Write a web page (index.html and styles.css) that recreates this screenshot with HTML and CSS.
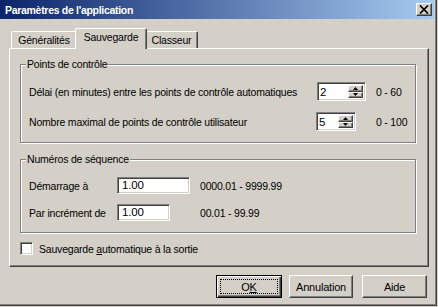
FILE: index.html
```html
<!DOCTYPE html>
<html lang="fr">
<head>
    <meta charset="UTF-8">
    <title>Paramètres de l'application</title>
    <link rel="stylesheet" href="styles.css">
</head>
<body>
    <div class="window">
        <div class="titlebar">
            <span class="title">Paramètres de l'application</span>
            <span class="close">
                <svg width="10" height="9" viewBox="0 0 10 9">
                    <path d="M1 0.5 L9 8.5 M9 0.5 L1 8.5" stroke="#000" stroke-width="1.7" fill="none"/>
                </svg>
            </span>
        </div>

        <div class="content">
            <div class="tabs">
                <div class="tab tab-first">Généralités</div>
                <div class="tab tab-active">Sauvegarde</div>
                <div class="tab tab-last">Classeur</div>
            </div>

            <div class="panel">
                <div class="group">
                    <div class="group-title">Points de contrôle</div>
                    <div class="rows rows-points">
                        <span>Délai (en minutes) entre les points de contrôle automatiques</span>
                        <div class="spin spin-wide">
                            <span class="spin-value">2</span>
                            <span class="spin-btns">
                                <span class="spin-btn"><svg width="5" height="3" viewBox="0 0 5 3"><path d="M2.5 0 L5 3 L0 3 Z" fill="#000"/></svg></span>
                                <span class="spin-btn"><svg width="5" height="3" viewBox="0 0 5 3"><path d="M0 0 L5 0 L2.5 3 Z" fill="#000"/></svg></span>
                            </span>
                        </div>
                        <span>0 - 60</span>

                        <span>Nombre maximal de points de contrôle utilisateur</span>
                        <div class="spin spin-narrow">
                            <span class="spin-value">5</span>
                            <span class="spin-btns">
                                <span class="spin-btn"><svg width="5" height="3" viewBox="0 0 5 3"><path d="M2.5 0 L5 3 L0 3 Z" fill="#000"/></svg></span>
                                <span class="spin-btn"><svg width="5" height="3" viewBox="0 0 5 3"><path d="M0 0 L5 0 L2.5 3 Z" fill="#000"/></svg></span>
                            </span>
                        </div>
                        <span>0 - 100</span>
                    </div>
                </div>

                <div class="group group-seq">
                    <div class="group-title">Numéros de séquence</div>
                    <div class="rows rows-seq">
                        <span>Démarrage à</span>
                        <div class="field field-wide">1.00</div>
                        <span>0000.01 - 9999.99</span>

                        <span>Par incrément de</span>
                        <div class="field field-narrow">1.00</div>
                        <span>00.01 - 99.99</span>
                    </div>
                </div>

                <div class="check-row">
                    <span class="checkbox"></span>
                    <span>Sauvegarde <u>a</u>utomatique à la sortie</span>
                </div>
            </div>

            <div class="buttons">
                <div class="btn btn-default"><span class="focus">O<u>K</u></span></div>
                <div class="btn btn-cancel">Annulation</div>
                <div class="btn btn-help">Aide</div>
            </div>
        </div>
    </div>
</body>
</html>
```

FILE: styles.css
```css
body {
    margin: 0;
    background-color: #d4d0c8;
    font-family: "Liberation Sans", Arial, sans-serif;
    font-size: 10.5px;
    letter-spacing: -0.2px;
    color: #000;
    white-space: nowrap;
}
.window {
    width: 437px;
    height: 306px;
    box-sizing: border-box;
    padding-right: 3px;
    background-color: #d4d0c8;
    box-shadow: inset -1px -1px 0 #404040, inset -2px -2px 0 #808080;
}
.titlebar {
    height: 19px;
    display: flex;
    align-items: center;
    justify-content: space-between;
    padding: 0 2px 0 5px;
    background: linear-gradient(to right, #0a246a, #a6caf0);
}
.title {
    color: #fff;
    font-weight: bold;
    font-size: 10.5px;
    letter-spacing: -0.3px;
}
.close {
    width: 16px;
    height: 13px;
    box-sizing: border-box;
    display: flex;
    align-items: center;
    justify-content: center;
    background-color: #d4d0c8;
    border-top: 1px solid #fff;
    border-left: 1px solid #fff;
    border-right: 1px solid #404040;
    border-bottom: 1px solid #404040;
    box-shadow: inset -1px -1px 0 #808080;
}
.content {
    padding: 9px 0 0 9px;
}
.tabs {
    display: flex;
    align-items: flex-end;
    height: 20px;
    padding-left: 2px;
}
.tab {
    box-sizing: border-box;
    height: 17px;
    line-height: 16px;
    text-align: center;
    border-top: 1px solid #fff;
    border-left: 1px solid #fff;
    border-right: 1px solid #404040;
    border-radius: 2px 2px 0 0;
    box-shadow: inset -1px 0 0 #808080;
    background-color: #d4d0c8;
}
.tab-first {
    width: 66px;
}
.tab-active {
    width: 72px;
    height: 21px;
    line-height: 17px;
    margin: 0 -2px -1px;
    position: relative;
    z-index: 1;
}
.tab-last {
    width: 53px;
}
.panel {
    width: 420px;
    height: 219px;
    box-sizing: border-box;
    padding: 15px 0 0 10px;
    border-top: 1px solid #fff;
    border-left: 1px solid #fff;
    border-right: 1px solid #404040;
    border-bottom: 1px solid #404040;
    box-shadow: inset -1px -1px 0 #808080;
}
.group {
    width: 396px;
    box-sizing: border-box;
    border: 1px solid #808080;
    box-shadow: 1px 1px 0 #fff, inset 1px 1px 0 #fff;
    padding: 0 0 11px 8px;
}
.group-seq {
    margin-top: 16px;
}
.group-title {
    width: fit-content;
    line-height: 13px;
    margin: -7px 0 0 -3px;
    padding: 0 1px;
    background-color: #d4d0c8;
}
.rows {
    display: grid;
    align-items: center;
    padding-top: 11px;
}
.rows-points {
    grid-template-columns: 287px 60px auto;
    grid-auto-rows: 19px;
    row-gap: 11px;
}
.rows-seq {
    grid-template-columns: 88px 83px auto;
    grid-auto-rows: 17px;
    row-gap: 10px;
}
.spin, .field {
    box-sizing: border-box;
    background-color: #fff;
    border-top: 1px solid #808080;
    border-left: 1px solid #808080;
    border-right: 1px solid #fff;
    border-bottom: 1px solid #fff;
    box-shadow: inset 1px 1px 0 #404040, inset -1px -1px 0 #d4d0c8;
}
.spin {
    height: 19px;
    display: flex;
    padding: 2px;
}
.spin-wide {
    width: 49px;
    margin-left: 1px;
}
.spin-narrow {
    width: 40px;
}
.spin-value {
    flex: 1;
    line-height: 15px;
    font-size: 11.5px;
}
.spin-btns {
    width: 15px;
    display: flex;
    flex-direction: column;
}
.spin-btn {
    flex: 1;
    display: flex;
    align-items: center;
    justify-content: center;
    background-color: #d4d0c8;
    border-top: 1px solid #fff;
    border-left: 1px solid #fff;
    border-right: 1px solid #404040;
    border-bottom: 1px solid #404040;
    box-shadow: inset -1px -1px 0 #808080;
}
.field {
    height: 17px;
    line-height: 15px;
    padding-left: 4px;
    font-size: 11.5px;
}
.field-wide {
    width: 73px;
}
.field-narrow {
    width: 53px;
}
.check-row {
    display: flex;
    align-items: center;
    gap: 6px;
    margin-top: 9px;
}
.checkbox {
    width: 13px;
    height: 13px;
    box-sizing: border-box;
    background-color: #fff;
    border-top: 1px solid #808080;
    border-left: 1px solid #808080;
    border-right: 1px solid #fff;
    border-bottom: 1px solid #fff;
    box-shadow: inset 1px 1px 0 #404040, inset -1px -1px 0 #d4d0c8;
}
.buttons {
    display: flex;
    justify-content: flex-end;
    width: 418px;
    margin-top: 8px;
}
.btn {
    height: 23px;
    box-sizing: border-box;
    display: flex;
    align-items: center;
    justify-content: center;
    background-color: #d4d0c8;
    border-top: 1px solid #fff;
    border-left: 1px solid #fff;
    border-right: 1px solid #404040;
    border-bottom: 1px solid #404040;
    box-shadow: inset -1px -1px 0 #808080;
    font-size: 11px;
}
.btn-default {
    width: 66px;
    border: 1px solid #000;
    box-shadow: inset 1px 1px 0 #fff, inset -1px -1px 0 #404040, inset -2px -2px 0 #808080;
    padding: 3px;
}
.focus {
    flex: 1;
    align-self: stretch;
    display: flex;
    align-items: center;
    justify-content: center;
    border: 1px dotted #000;
}
.btn-cancel {
    width: 64px;
    margin-left: 7px;
}
.btn-help {
    width: 65px;
    margin-left: 9px;
}
```
